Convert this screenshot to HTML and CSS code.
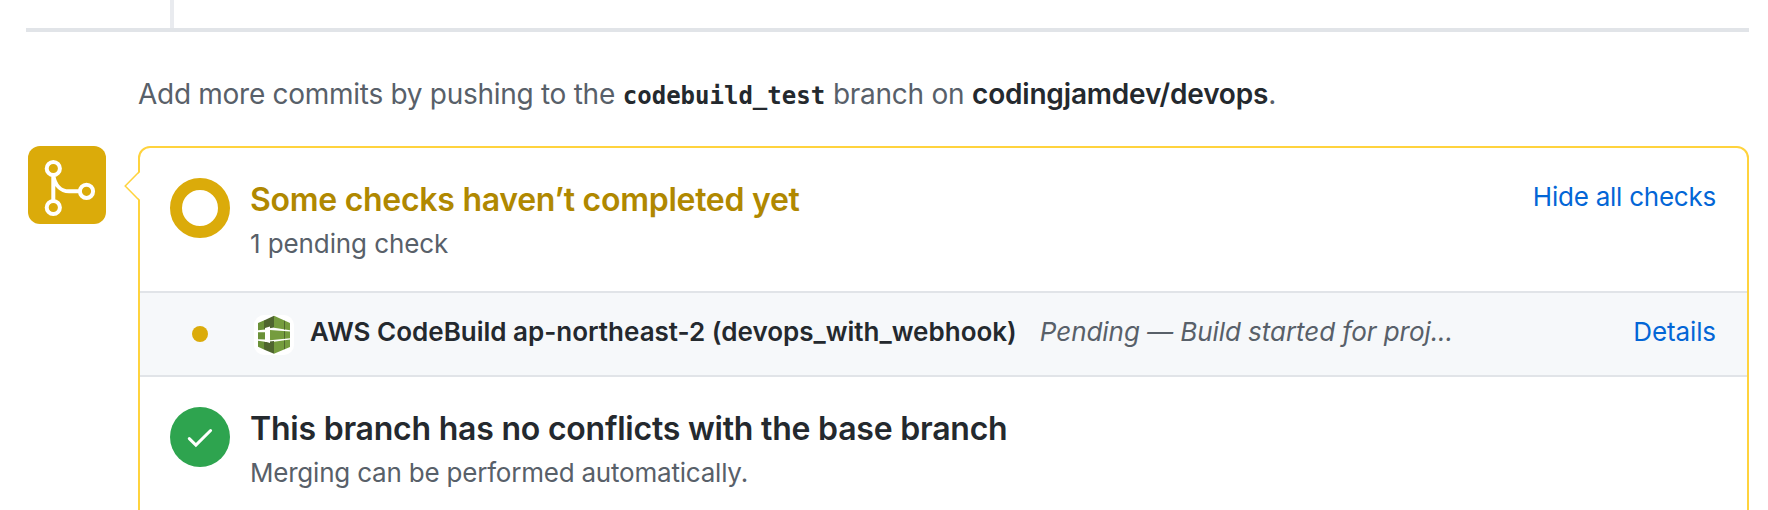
FILE: index.html
```html
<!DOCTYPE html>
<html lang="en">
<head>
<meta charset="utf-8">
<title>Pull request checks</title>
<link rel="stylesheet" href="styles.css">
</head>
<body>
<main class="page">
  <div class="timeline"><span class="timeline-line"></span></div>
  <p class="push-hint"><span class="hint-text">Add more commits by pushing to the</span> <code class="branch-name">codebuild_test</code> <span class="hint-text">branch on</span> <strong class="repo">codingjamdev/devops</strong>.</p>
  <div class="merge">
    <div class="merge-avatar">
      <svg class="merge-icon" viewBox="0 0 78 78" fill="none" stroke="#fff" stroke-width="4">
        <circle cx="25.3" cy="22.5" r="6.6"/>
        <circle cx="25.3" cy="61.5" r="6.6"/>
        <circle cx="58.5" cy="45.3" r="6.6"/>
        <path d="M25.3 29v26M25.3 29.5C27 39 32.500 45.300 41 45.300h11"/>
      </svg>
    </div>
    <section class="merge-box">
      <svg class="caret" viewBox="0 0 16 30">
        <path d="M16 1L1.200 15 16 29z" fill="#fff"/>
        <path d="M15.200 .8L1.200 15l14 14.200" fill="none" stroke="#ffd33d" stroke-width="1.500"/>
      </svg>
      <div class="status">
        <span class="ring"></span>
        <div class="status-body">
          <h2 class="title title-pending">Some checks haven’t completed yet</h2>
          <p class="sub sub-pending">1 pending check</p>
        </div>
        <a class="link toggle">Hide all checks</a>
      </div>
      <div class="check">
        <span class="check-state"><span class="dot"></span></span>
        <svg class="app-logo" viewBox="0 0 40 40">
          <rect width="40" height="40" rx="10" fill="#fff"/>
          <path d="M20 .8L11 5v9l9-1.500z" fill="#4f652f"/>
          <path d="M20 .8L36 8v7.300L20 12.800z" fill="#759c3e"/>
          <path d="M4 8l7-3v9.500l-7 .8z" fill="#6a9138"/>
          <path d="M4 17.300h7.500v7.200l-7.500-.2z" fill="#6a9138"/>
          <path d="M4 25.800l7 .9v8.300l-7-3.200z" fill="#6a9138"/>
          <path d="M11 27l9-1v12.700l-9-3.800z" fill="#4f652f"/>
          <path d="M20 26.800l16-2.300v7.500L20 38.700z" fill="#759c3e"/>
          <path d="M16 15l20 1.500v6.800l-20 2z" fill="#759c3e"/>
          <path d="M30.500 5.800v8.800M30.500 16.300v7.400M30.500 25.400v8.700M10.500 5.400v8.800M10.500 27v7.300" stroke="#4b612c" stroke-width=".9"/>
          <path d="M11 13l5-1.500v3.200l-1 .3v10h1v3l-5-1.500z" fill="#fff"/>
        </svg>
        <strong class="check-name">AWS CodeBuild ap-northeast-2 (devops_with_webhook)</strong>
        <em class="check-desc">Pending — Build started for proj...</em>
        <a class="link details">Details</a>
      </div>
      <div class="status">
        <svg class="badge" viewBox="0 0 60 60">
          <circle cx="30" cy="30" r="30" fill="#2ea44f"/>
          <path d="M19.300 31.600l6.600 6.500L40.600 23.500" fill="none" stroke="#fff" stroke-width="3" stroke-linecap="round"/>
        </svg>
        <div class="status-body">
          <h2 class="title title-clean">This branch has no conflicts with the base branch</h2>
          <p class="sub sub-clean">Merging can be performed automatically.</p>
        </div>
      </div>
    </section>
  </div>
</main>
</body>
</html>
```
FILE: styles.css
```css
* { box-sizing: border-box; }
body { margin: 0; background: #fff; color: #24292e; font-family: Inter, "Liberation Sans", sans-serif; }
h2, p { margin: 0; }
.page { height: 510px; padding: 0 19px 0 26px; overflow: hidden; }
.timeline { height: 32px; padding-left: 144px; border-bottom: 4px solid #e1e4e8; }
.timeline-line { display: block; width: 4px; height: 28px; background: #e9ebef; }
.push-hint { padding: 41px 0 31px 112px; font-size: 28px; line-height: 42px; color: #586069; white-space: nowrap; }
.hint-text { letter-spacing: -.28px; }
.branch-name { font: bold 24px/1 "DejaVu Sans Mono", monospace; color: #24292e; }
.repo { font-weight: 600; color: #24292e; letter-spacing: -.2px; }
.merge { display: flex; gap: 32px; padding-left: 2px; }
.merge-avatar { flex: none; width: 78px; height: 78px; border-radius: 12px; background: #dbab0a; }
.merge-icon { display: block; width: 78px; height: 78px; }
.merge-box { position: relative; flex: 1; height: 400px; border: 2px solid #ffd33d; border-radius: 12px; }
.caret { position: absolute; left: -16px; top: 23px; width: 16px; height: 30px; }
.status { display: flex; padding: 28px 31px 28px 30px; }
.ring { flex: none; width: 60px; height: 60px; margin-top: 2px; border: 12px solid #dbab0a; border-radius: 50%; }
.badge { flex: none; width: 60px; height: 60px; margin-top: 2px; }
.status-body { flex: 1; padding-left: 20px; }
.title { font-size: 32px; line-height: 48px; font-weight: 600; }
.title-pending { color: #b08800; letter-spacing: -.28px; }
.title-clean { letter-spacing: -.22px; }
.sub { font-size: 26px; line-height: 39px; color: #586069; letter-spacing: -.21px; }
.sub-pending { letter-spacing: -.1px; }
.link { font-size: 26px; line-height: 39px; color: #0366d6; }
.toggle { margin-top: 1px; letter-spacing: -.24px; }
.check { display: flex; align-items: flex-start; height: 86px; padding: 19px 31px 0 30px; border: solid #e1e4e8; border-width: 2px 0; background: #f6f8fa; font-size: 26px; line-height: 39px; white-space: nowrap; }
.check-state { display: flex; justify-content: center; width: 60px; padding-top: 14px; }
.dot { width: 16px; height: 16px; border-radius: 50%; background: #dbab0a; }
.app-logo { width: 40px; height: 40px; margin: 3px 16px 0 24px; }
.check-name { font-weight: 600; }
.check-desc { margin-left: 23px; color: #586069; letter-spacing: -.06px; }
.details { margin-left: auto; letter-spacing: -.1px; }
```
